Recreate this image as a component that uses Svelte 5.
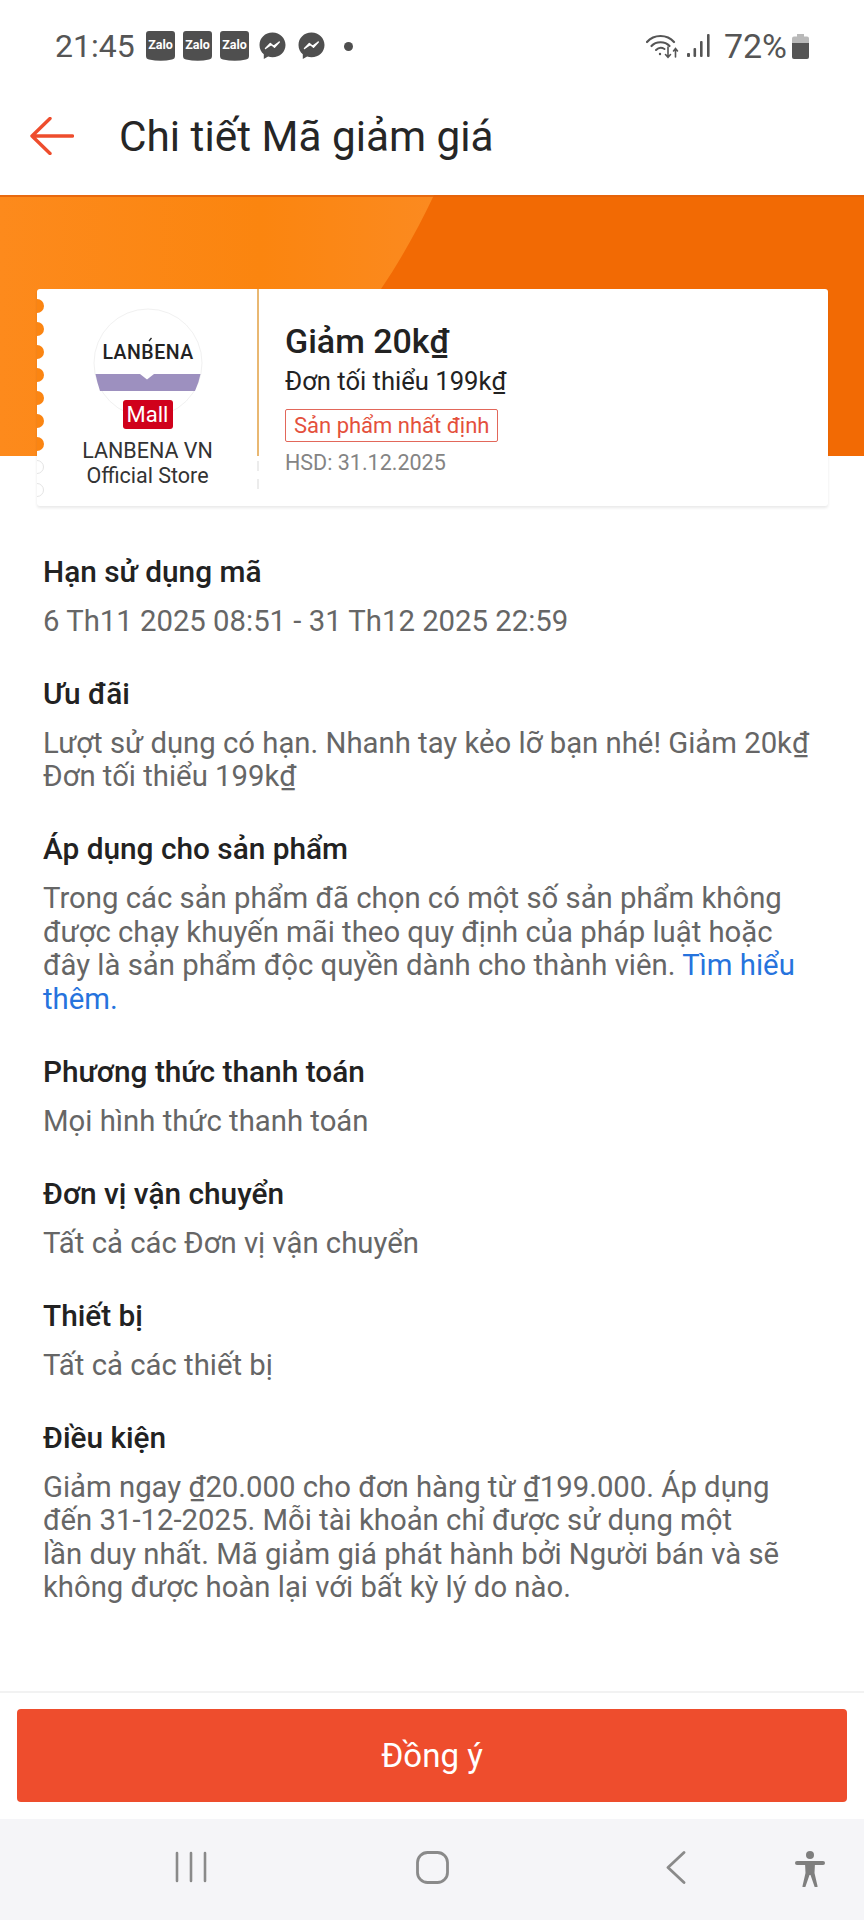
<script>
  const sections = [
    { title: 'Hạn sử dụng mã', lines: ['6 Th11 2025 08:51 - 31 Th12 2025 22:59'] },
    { title: 'Ưu đãi', lines: ['Lượt sử dụng có hạn. Nhanh tay kẻo lỡ bạn nhé! Giảm 20k₫', 'Đơn tối thiểu 199k₫'] },
    {
      title: 'Áp dụng cho sản phẩm',
      lines: [
        'Trong các sản phẩm đã chọn có một số sản phẩm không',
        'được chạy khuyến mãi theo quy định của pháp luật hoặc',
        'đây là sản phẩm độc quyền dành cho thành viên.'
      ],
      link: true
    },
    { title: 'Phương thức thanh toán', lines: ['Mọi hình thức thanh toán'] },
    { title: 'Đơn vị vận chuyển', lines: ['Tất cả các Đơn vị vận chuyển'] },
    { title: 'Thiết bị', lines: ['Tất cả các thiết bị'] },
    {
      title: 'Điều kiện',
      lines: [
        'Giảm ngay ₫20.000 cho đơn hàng từ ₫199.000. Áp dụng',
        'đến 31-12-2025. Mỗi tài khoản chỉ được sử dụng một',
        'lần duy nhất. Mã giảm giá phát hành bởi Người bán và sẽ',
        'không được hoàn lại với bất kỳ lý do nào.'
      ]
    }
  ];
  // scallops on the coupon's left edge, the last two sit below the banner
  const notches = [0, 1, 2, 3, 4, 5, 6, 7, 8];
</script>

<div class="page">
  <div class="status">
    <span class="time">21:45</span>
    <div class="apps">
      {#each [0, 1, 2] as z}
        <svg class="zalo" width="29" height="30" viewBox="0 0 29 30">
          <path d="M3 0h23a3 3 0 0 1 3 3v22q0 3-3 3.5-11 2.500-23 0-3-.5-3-3.500V3a3 3 0 0 1 3-3z" fill="#4f4f4f" />
          <text x="14.500" y="18" text-anchor="middle" class="zalo-t">Zalo</text>
        </svg>
      {/each}
      {#each [0, 1] as m}
        <svg class="msg" width="27" height="28" viewBox="0 0 27 28">
          <path d="M13.500 0.500C6 .5 0.500 6 0.500 13c0 3.800 1.600 7 4.300 9.300V27l4.300-2.400c1.400.4 2.900.6 4.400.6C21 25.200 26.500 19.900 26.500 13S21 .5 13.500 .5z" fill="#4f4f4f" />
          <path d="M6.500 16.500l4.800-5 3.200 2.800 5.800-4.300-4.800 5.200-3.200-2.800z" fill="#fff" stroke="#fff" stroke-width="1.400" stroke-linejoin="round" />
        </svg>
      {/each}
      <span class="dot"></span>
    </div>
    <div class="sys">
      <svg width="33" height="26" viewBox="0 0 33 26" fill="none" stroke="#555" stroke-linecap="round">
        <path d="M1 9C8 1 21 1 28 9" stroke-width="2.200" />
        <path d="M5.500 13c4.500-5 13.500-5 18 0" stroke-width="2.200" />
        <path d="M10 17c2.500-2.500 6-2.500 8.500-1" stroke-width="2" />
        <circle cx="14" cy="21" r="1.200" fill="#555" stroke="none" />
        <path d="M22 14v10M19.500 21.500l2.500 2.800 2.500-2.800" stroke-width="1.600" />
        <path d="M29.500 24v-8M27.500 18l2-2.500 2 2.500" stroke-width="1.600" />
      </svg>
      <svg class="sig" width="23" height="24" viewBox="0 0 23 24" fill="#555">
        <rect x="0" y="19" width="3" height="4" rx="1" />
        <rect x="6.500" y="14" width="2.600" height="9" rx="1" />
        <rect x="13" y="7" width="2.600" height="16" rx="1" />
        <rect x="20" y="0" width="2.600" height="23" rx="1" />
      </svg>
      <span class="pct">72%</span>
      <svg width="17" height="25" viewBox="0 0 17 25">
        <path d="M5 0h7v2.500h3a2 2 0 0 1 2 2V9H0V4.500a2 2 0 0 1 2-2h3z" fill="#b9b9b9" />
        <path d="M0 9h17v14a2 2 0 0 1-2 2H2a2 2 0 0 1-2-2z" fill="#555" />
      </svg>
    </div>
  </div>

  <header class="bar">
    <svg width="44" height="38" viewBox="0 0 44 38" fill="none" stroke="#ee4d2d" stroke-width="3.400" stroke-linecap="round" stroke-linejoin="round">
      <path d="M42.500 19H2M20 1.500L2 19l18 17.500" />
    </svg>
    <h1>Chi tiết Mã giảm giá</h1>
  </header>

  <div class="hero">
    <svg class="hero-bg" viewBox="0 0 864 261" preserveAspectRatio="none">
      <defs>
        <linearGradient id="lite" x1="0" x2="1" y1="0" y2="0">
          <stop offset="0" stop-color="#fd8a1c" />
          <stop offset="0.6" stop-color="#fb850f" />
          <stop offset="1" stop-color="#fb8a20" />
        </linearGradient>
      </defs>
      <rect width="864" height="261" fill="#f26a04" />
      <path d="M0 0H434C418 34 400 66 381 94C362 120 345 150 330 190C322 214 316 240 312 261H0z" fill="url(#lite)" />
      <rect width="864" height="2" fill="#e2620c" opacity="0.8" />
    </svg>

    <div class="card">
      <div class="notches">
        {#each notches as n}
          <span class="notch" class:out={n > 6}></span>
        {/each}
      </div>

      <div class="shop">
        <div class="logo">
          <svg width="110" height="110" viewBox="0 0 110 110">
            <circle cx="55" cy="55" r="54" fill="#fff" stroke="#f1f1f1" stroke-width="1" />
            <text x="55" y="51" text-anchor="middle" class="brand">LANBENA</text>
            <path d="M56 33l2.500-3" stroke="#222" stroke-width="1.300" />
            <path d="M2.500 66H47l7 5.500L61 66h46.500Q106 74 102 83H7Q4 74 2.500 66z" fill="#9d90bf" />
          </svg>
          <span class="mall">Mall</span>
        </div>
        <div class="shop-name">LANBENA VN<br />Official Store</div>
      </div>

      <div class="rule"></div>

      <div class="info">
        <div class="big">Giảm 20k₫</div>
        <div class="min">Đơn tối thiểu 199k₫</div>
        <span class="tag">Sản phẩm nhất định</span>
        <div class="hsd">HSD: 31.12.2025</div>
      </div>
    </div>
  </div>

  <main class="details">
    {#each sections as s}
      <section>
        <h2>{s.title}</h2>
        <p>
          {#each s.lines as line, i}
            {#if i > 0}<br />{/if}{line}
          {/each}
          {#if s.link}
            <a href="#more">Tìm hiểu<br />thêm.</a>
          {/if}
        </p>
      </section>
    {/each}
  </main>

  <footer>
    <div class="action"><button>Đồng ý</button></div>
    <nav>
      <svg class="nav-a" width="32" height="32" viewBox="0 0 32 32" fill="none" stroke="#8a8a8a" stroke-width="2.600" stroke-linecap="round">
        <path d="M2 2v28M16 2v28M30 2v28" />
      </svg>
      <svg class="nav-b" width="33" height="33" viewBox="0 0 33 33" fill="none" stroke="#8a8a8a" stroke-width="2.800">
        <rect x="1.500" y="1.500" width="30" height="30" rx="10" />
      </svg>
      <svg class="nav-c" width="20" height="33" viewBox="0 0 20 33" fill="none" stroke="#8a8a8a" stroke-width="2.800" stroke-linecap="round" stroke-linejoin="round">
        <path d="M18 1.500L2 16.500l16 15" />
      </svg>
      <svg class="nav-d" width="30" height="36" viewBox="0 0 30 36" fill="#7f7f7f">
        <circle cx="15" cy="4" r="4" />
        <rect x="0" y="10" width="30" height="4" rx="2" />
        <path d="M10 12h10l-.5 10 3 13a1.500 1.500 0 0 1-3 .5L15.500 24h-1L10.500 35.500a1.500 1.500 0 0 1-3-.5l3-13z" />
      </svg>
    </nav>
  </footer>
</div>

<style>
  :global(body) { background: #fff; }
  .page { height: 1920px; width: 864px; display: flex; flex-direction: column; overflow: hidden; background: #fff; font-family: Roboto, "Noto Sans", sans-serif; color: #222; }

  .status { height: 92px; flex: none; display: flex; align-items: center; padding: 0 55px; box-sizing: border-box; color: #555; }
  .time, .pct { font-size: 32px; line-height: 1; }
  .pct { font-size: 34px; }
  .time { width: 91px; }
  .apps { display: flex; align-items: center; gap: 8px; }
  .msg { margin-left: 2px; margin-right: 2px; }
  .zalo-t { font: 700 12.500px Roboto, sans-serif; fill: #fff; }
  .dot { width: 9px; height: 9px; border-radius: 50%; background: #4f4f4f; margin-left: 9px; }
  .sys { margin-left: auto; display: flex; align-items: center; }
  .sig { margin-left: 8px; }
  .pct { margin: 0 5px 0 14px; }

  .bar { height: 103px; flex: none; box-sizing: border-box; padding: 0 0 15px 30px; display: flex; align-items: center; gap: 45px; }
  h1 { margin: 0; font-size: 42.300px; font-weight: 400; color: #262626; }

  .hero { position: relative; height: 311px; flex: none; box-sizing: border-box; padding: 94px 36px 0 37px; }
  .hero-bg { position: absolute; left: 0; top: 0; width: 864px; height: 261px; }

  .card { position: relative; height: 217px; display: flex; background: #fff; border-radius: 3px; box-shadow: 0 2px 3px rgba(0, 0, 0, 0.09); }
  .notches { position: absolute; left: 0; top: 10px; width: 8px; height: 207px; overflow: hidden; display: flex; flex-direction: column; gap: 9px; }
  .notch { flex: none; width: 14px; height: 14px; margin-left: -7px; border-radius: 50%; background: #fb8512; }
  .notch.out { background: #fff; box-sizing: border-box; border: 1px solid #e4e4e4; }

  .shop { width: 221px; flex: none; display: flex; flex-direction: column; align-items: center; padding-top: 19px; box-sizing: border-box; }
  .logo { position: relative; width: 110px; height: 110px; }
  .logo svg { display: block; }
  .brand { font: 500 19.500px Roboto, sans-serif; fill: #222; letter-spacing: 0.5px; }
  .mall { position: absolute; left: 30px; top: 92px; width: 50px; height: 29px; border-radius: 3px; background: #d0011b; color: #fff; font-size: 22px; line-height: 29px; text-align: center; }
  .shop-name { margin-top: 20px; font-size: 21.500px; line-height: 25px; text-align: center; color: #333; white-space: nowrap; }

  .rule { width: 2px; margin-left: -1px; flex: none; background: linear-gradient(to bottom, #e9b872 0, #e9b872 167px, transparent 167px, transparent 172px, #ececec 172px, #ececec 182px, transparent 182px, transparent 190px, #ececec 190px, #ececec 200px, transparent 200px); }

  .info { padding: 33px 0 0 26px; display: flex; flex-direction: column; align-items: flex-start; }
  .big { font-size: 34px; line-height: 38px; font-weight: 500; color: #222; }
  .min { font-size: 25.600px; line-height: 30px; margin-top: 6px; color: #222; }
  .tag { margin-top: 13px; height: 33px; box-sizing: border-box; padding: 0 8px; border: 1px solid #e2675a; border-radius: 2px; font-size: 22px; line-height: 31px; color: #e4503c; white-space: nowrap; }
  .hsd { margin-top: 7px; font-size: 21.500px; line-height: 28px; color: #848484; }

  .details { flex: 1; padding: 48.500px 20px 0 43px; }
  section { margin-bottom: 38.500px; }
  h2 { margin: 0 0 16.500px; font-size: 29.800px; line-height: 33.500px; font-weight: 500; color: #222; }
  p { margin: 0; font-size: 29.300px; line-height: 33.500px; color: #666; white-space: nowrap; }
  a { color: #2673dd; text-decoration: none; }

  footer { flex: none; border-top: 2px solid #f2f2f2; }
  .action { padding: 16px 17px 17px; }
  button { display: block; width: 100%; height: 93px; border: 0; border-radius: 4px; background: #ee4d2d; color: #fff; font: 400 33px Roboto, sans-serif; }
  nav { height: 101px; background: #f5f5f8; position: relative; }
  nav svg { position: absolute; top: 32px; }
  .nav-a { left: 175px; }
  .nav-b { left: 416px; }
  .nav-c { left: 666px; }
  .nav-d { left: 795px; }
</style>
